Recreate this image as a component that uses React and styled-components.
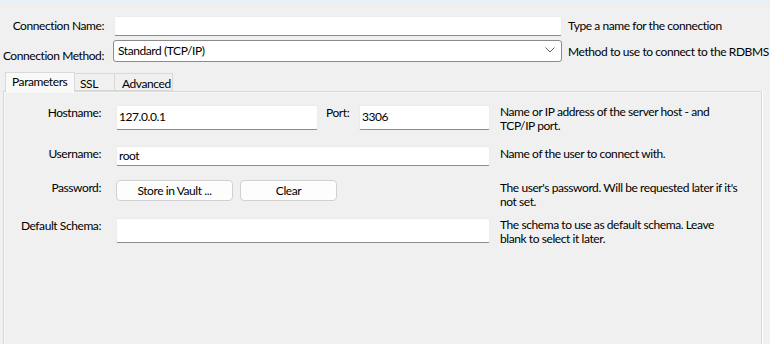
import React from 'react';
import styled, { createGlobalStyle } from 'styled-components';

const GlobalStyle = createGlobalStyle`
  html, body {
    margin: 0;
    padding: 0;
    background: #f0f0f0;
  }
  body {
    font-family: Lato, "Liberation Sans", sans-serif;
    font-size: 12px;
    letter-spacing: -0.42px;
    color: #000;
  }
`;

const Window = styled.div`
  width: 770px;
  height: 344px;
  overflow: hidden;
  background: #f0f0f0;
  border-top: 3px solid #eaf0f7;
  box-sizing: border-box;
`;

const TopForm = styled.div`
  display: grid;
  grid-template-columns: 113px 449px auto;
  grid-template-rows: 20px 22px;
  row-gap: 4px;
  padding-top: 13px;
`;

const TopLabel = styled.div`
  text-align: right;
  padding-right: 9px;
  line-height: 14px;
  padding-top: ${(p) => p.$offset}px;
  white-space: nowrap;
`;

const TopField = styled.div`
  margin-left: ${(p) => p.$shift || 0}px;
`;

const TopHelp = styled.div`
  padding-left: 6px;
  line-height: 14px;
  padding-top: ${(p) => p.$offset}px;
  white-space: nowrap;
`;

const TextInput = styled.div`
  box-sizing: border-box;
  height: 100%;
  width: ${(p) => (p.$w ? `${p.$w}px` : '100%')};
  background: #fff;
  border: 1px solid #ececec;
  border-bottom: 1px solid #8c8c8c;
  border-radius: 2px;
  padding-left: 2px;
  padding-bottom: 2px;
  display: flex;
  align-items: center;
`;

const Select = styled.div`
  box-sizing: border-box;
  height: 100%;
  background: #fff;
  border: 1px solid #8b8b8b;
  border-radius: 3px;
  padding: 0 6px 2px 4px;
  display: flex;
  align-items: center;
  justify-content: space-between;
`;

const TabBar = styled.div`
  display: flex;
  align-items: flex-end;
  margin-top: 10px;
  padding-left: 5px;
  height: 19px;
  position: relative;
  z-index: 1;
`;

const Tab = styled.div`
  box-sizing: border-box;
  width: ${(p) => p.$w}px;
  height: ${(p) => (p.$active ? 20 : 18)}px;
  margin-bottom: ${(p) => (p.$active ? -1 : 0)}px;
  padding-left: ${(p) => p.$pad}px;
  padding-top: ${(p) => (p.$active ? 2 : 3)}px;
  line-height: 14px;
  background: ${(p) => (p.$active ? '#f9f9f9' : '#f0f0f0')};
  border: 1px solid #d9d9d9;
  border-bottom: ${(p) => (p.$active ? 'none' : '1px solid #d9d9d9')};
  border-left: ${(p) => (p.$first ? '1px solid #d9d9d9' : 'none')};
  white-space: nowrap;
`;

const Panel = styled.div`
  box-sizing: border-box;
  margin-left: 3px;
  width: 759px;
  height: 260px;
  border: 1px solid #d9d9d9;
  box-shadow: 1px 0 0 #ffffff, inset 1px 1px 0 #f7f7f7;
  background: #f0f0f0;
  padding-top: 13px;
  display: flex;
  flex-direction: column;
`;

const Row = styled.div`
  display: grid;
  grid-template-columns: 112px 374px auto;
  margin-top: ${(p) => p.$gap || 0}px;
`;

const Label = styled.div`
  text-align: right;
  padding-right: 15px;
  line-height: 13px;
  padding-top: 1px;
  white-space: nowrap;
`;

const Field = styled.div`
  height: ${(p) => p.$h}px;
  display: flex;
  align-items: flex-start;
  gap: ${(p) => p.$gap || 0}px;
`;

const Help = styled.div`
  padding-left: 10px;
  line-height: 13.5px;
  padding-top: ${(p) => p.$offset || 0}px;
  width: 241px;
`;

const PortLabel = styled.div`
  width: 41px;
  padding-left: 8px;
  box-sizing: border-box;
  line-height: 13px;
  padding-top: 1px;
`;

const Button = styled.div`
  box-sizing: border-box;
  width: ${(p) => p.$w}px;
  height: 21px;
  background: #fdfdfd;
  border: 1px solid #d0d0d0;
  border-radius: 4px;
  display: flex;
  align-items: center;
  justify-content: center;
  padding-bottom: 1px;
`;

const Chevron = () => (
  <svg width="10" height="6" viewBox="0 0 10 6">
    <path d="M0.5 0.5 L5 5 L9.5 0.5" fill="none" stroke="#606060" strokeWidth="1" />
  </svg>
);

export default function App() {
  return (
    <Window>
      <GlobalStyle />
      <TopForm>
        <TopLabel $offset={3}>Connection Name:</TopLabel>
        <TopField $shift={1}>
          <TextInput />
        </TopField>
        <TopHelp $offset={3}>Type a name for the connection</TopHelp>

        <TopLabel $offset={9}>Connection Method:</TopLabel>
        <TopField>
          <Select>
            <span>Standard (TCP/IP)</span>
            <Chevron />
          </Select>
        </TopField>
        <TopHelp $offset={5}>Method to use to connect to the RDBMS</TopHelp>
      </TopForm>

      <TabBar>
        <Tab $active $first $w={70} $pad={6}>Parameters</Tab>
        <Tab $w={40} $pad={5}>SSL</Tab>
        <Tab $w={58} $pad={7}>Advanced</Tab>
      </TabBar>

      <Panel>
        <Row>
          <Label>Hostname:</Label>
          <Field $h={25}>
            <TextInput $w={202}>127.0.0.1</TextInput>
            <PortLabel>Port:</PortLabel>
            <TextInput $w={131}>3306</TextInput>
          </Field>
          <Help>Name or IP address of the server host - and TCP/IP port.</Help>
        </Row>

        <Row $gap={14}>
          <Label>Username:</Label>
          <Field $h={20}>
            <TextInput>root</TextInput>
          </Field>
          <Help $offset={1}>Name of the user to connect with.</Help>
        </Row>

        <Row $gap={14}>
          <Label>Password:</Label>
          <Field $h={27} $gap={7}>
            <Button $w={117}>Store in Vault ...</Button>
            <Button $w={97}>Clear</Button>
          </Field>
          <Help $offset={1}>The user's password. Will be requested later if it's not set.</Help>
        </Row>

        <Row $gap={10}>
          <Label>Default Schema:</Label>
          <Field $h={25}>
            <TextInput />
          </Field>
          <Help>The schema to use as default schema. Leave blank to select it later.</Help>
        </Row>
      </Panel>
    </Window>
  );
}
